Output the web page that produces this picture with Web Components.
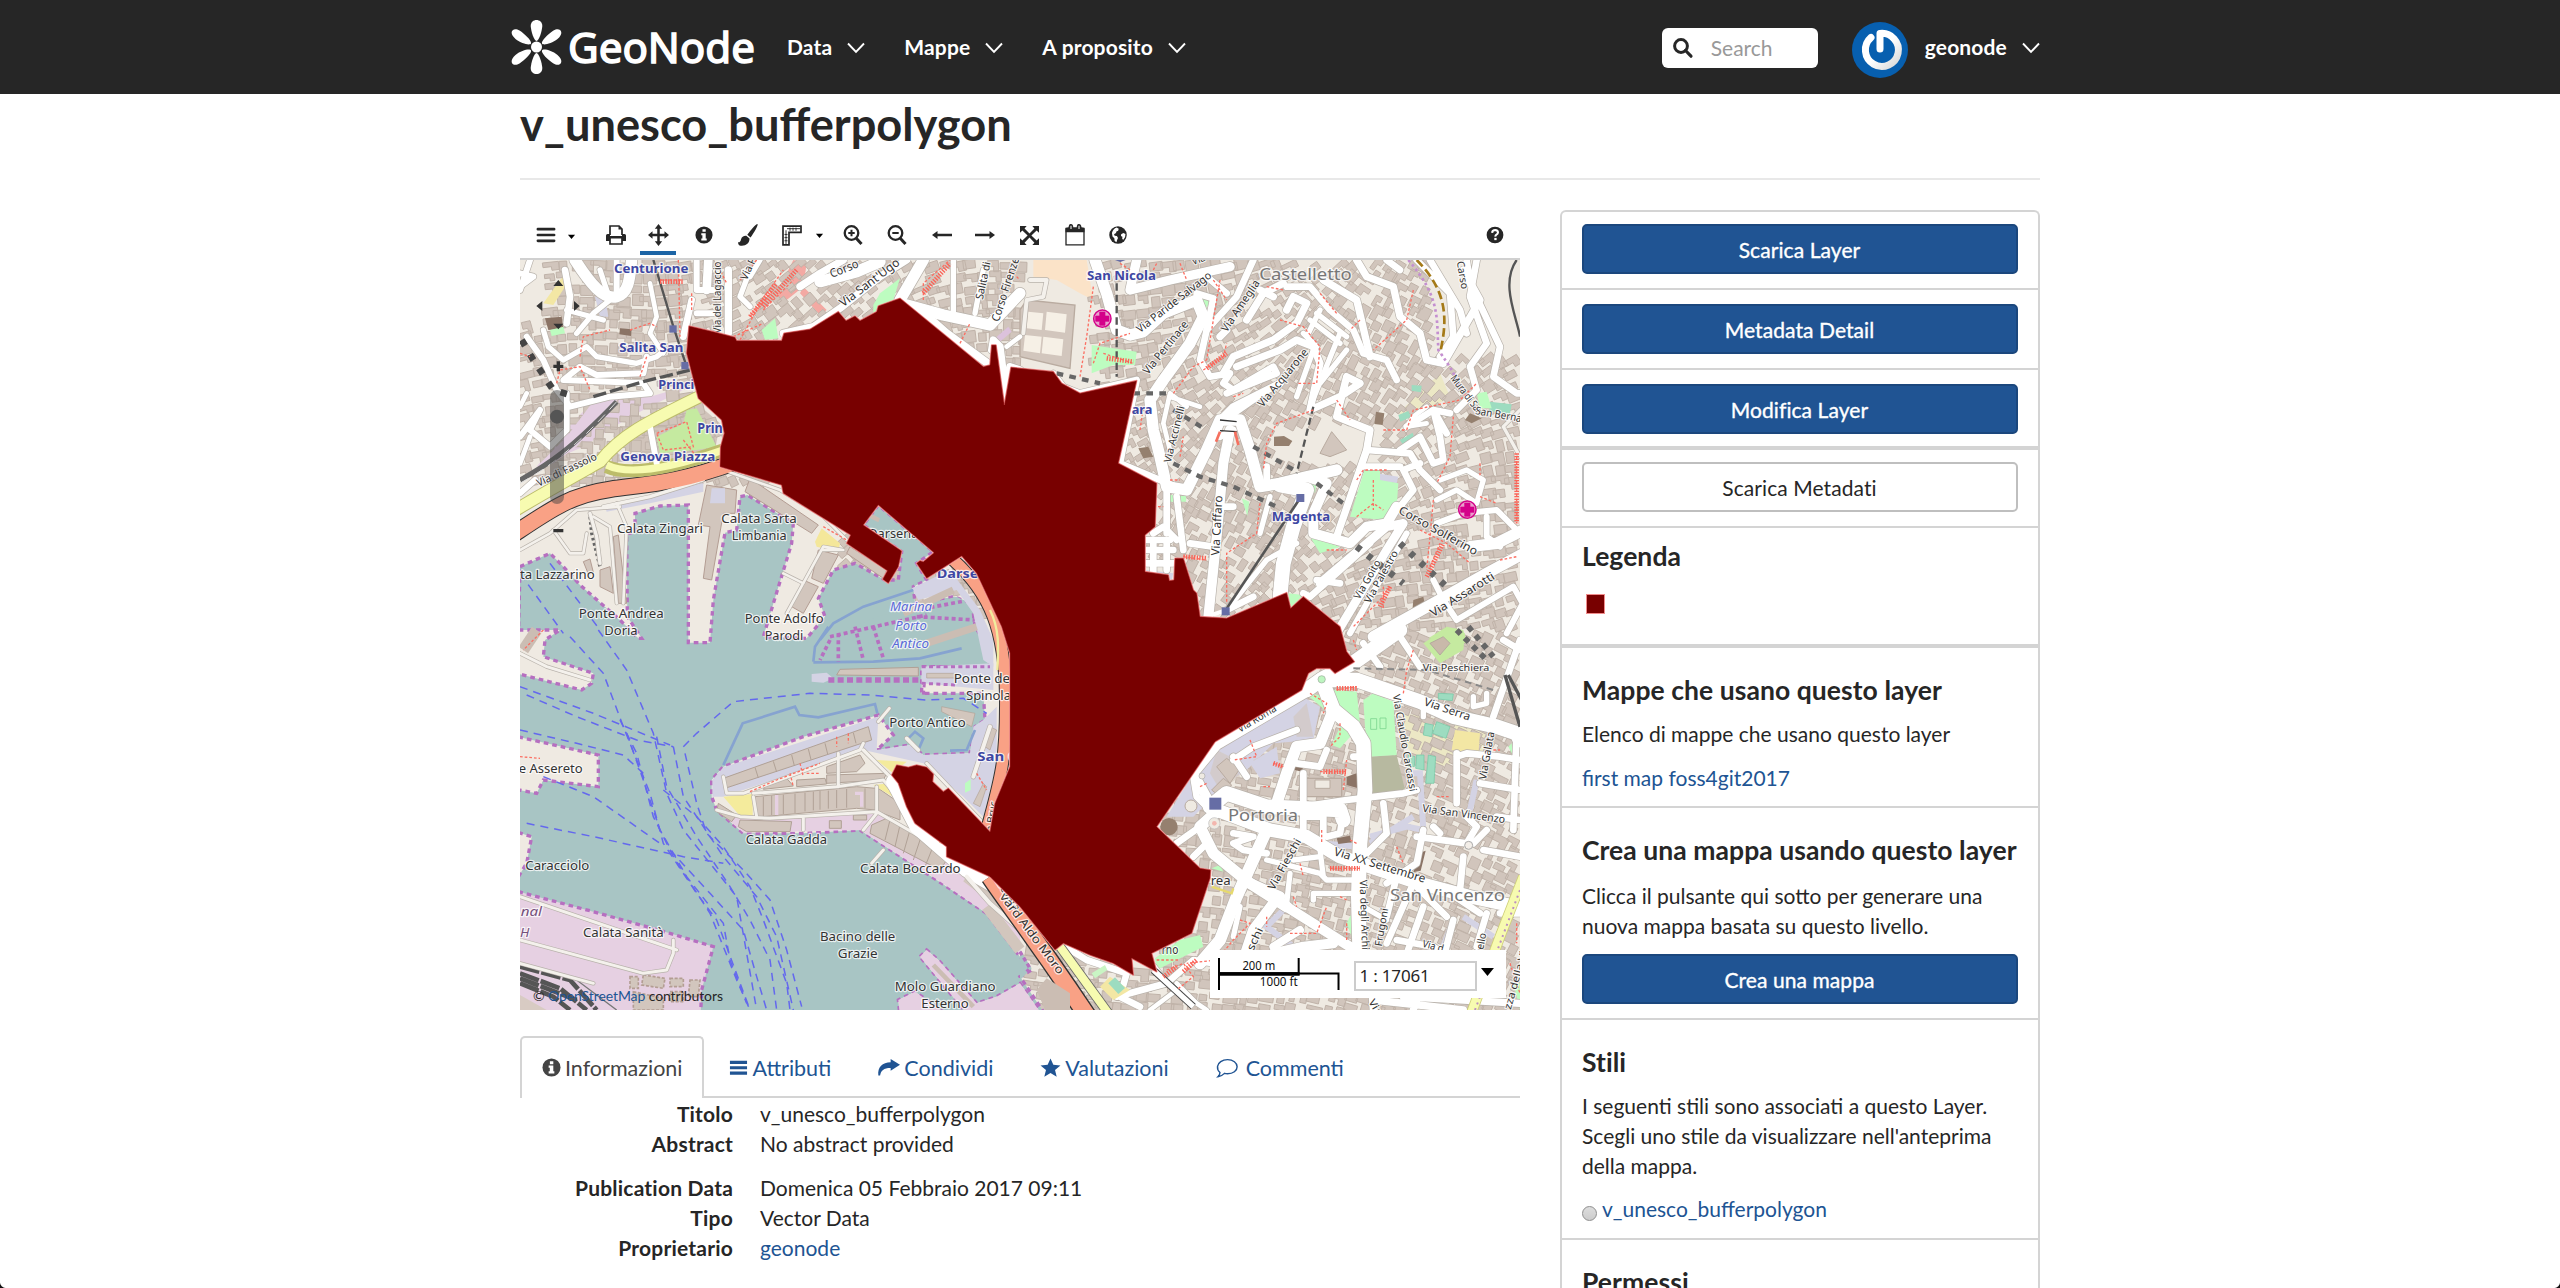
<!DOCTYPE html>
<html lang="it">
<head>
<meta charset="utf-8">
<title>v_unesco_bufferpolygon</title>
<style>
html,body{margin:0;height:100%}
body{height:1288px;overflow:hidden;background:#fff;font:21px/30px Lato,"Liberation Sans",sans-serif;color:#262626}
</style>
</head>
<body>
<geo-page></geo-page>
<script>
const define = (name, html, after) => {
  const tpl = document.createElement('template');
  tpl.innerHTML = html;
  customElements.define(name, class extends HTMLElement {
    constructor() {
      super();
      this.attachShadow({mode: 'open'}).append(tpl.content.cloneNode(true));
    }
    connectedCallback() { if (after) after(this, this.shadowRoot); }
  });
};

/* ---------- icons, drawn in a 20x20 box ---------- */
const ICONS = {
  chevron: '<path d="M2 5.500l8 8.300 8-8.300" fill="none" stroke="currentColor" stroke-width="1.900"/>',
  search: '<circle cx="8" cy="8" r="6.400" fill="none" stroke="currentColor" stroke-width="3"/><path d="M12.500 12.500l5.500 5.700" stroke="currentColor" stroke-width="3.200" stroke-linecap="round"/>',
  menu: '<path d="M1 3.500h18M1 10h18M1 16.500h18" stroke="currentColor" stroke-width="3" stroke-linecap="round"/>',
  bars: '<path d="M1 3h18v3.300H1zM1 8.600h18v3.300H1zM1 14.200h18v3.300H1z" fill="currentColor"/>',
  caret: '<path d="M3.500 7h13l-6.500 7.500z" fill="#000"/>',
  print: '<path d="M4 10V1h9l3 3v6M4 13v6h12v-6" fill="#fff" stroke="currentColor" stroke-width="1.700"/><path d="M12.500 1v3.500H16M0 10.500Q0 9 1.500 9H4v2h12V9h2.500Q20 9 20 10.500V16h-4v-2.500H4V16H0z" fill="currentColor"/>',
  move: '<path d="M10 0l3.500 4.300h-2.300v4.500h4.500V6.500L20 10l-4.300 3.500v-2.300h-4.500v4.500h2.300L10 20l-3.500-4.300h2.300v-4.500H4.300v2.300L0 10l4.300-3.500v2.300h4.500V4.300H6.500z" fill="currentColor"/>',
  info: '<circle cx="10" cy="10" r="9.500" fill="currentColor"/><path d="M8.300 3.500h3.600v3H8.300zM7 8h4.900v6H13v2.200H7V14h1.200v-3.800H7z" fill="#fff"/>',
  brush: '<path d="M19.500 0C20.500 1 16 8 12.500 12.300L9.300 9.800C13 5 18.500-.5 19.500 0zM8.300 10.700l3.200 2.500C11.700 18 7 20.500 1.500 19.500Q0 18.500 0 16.500c1.500.5 2.500-.6 3-2.500.6-2.300 2.800-3.500 5.300-3.300z" fill="currentColor"/>',
  ruler: '<path d="M1 1h18v6H7v12H1z" fill="#fff" stroke="currentColor" stroke-width="1.700"/><path d="M5 3.500h13M4 5v14M8 2.500v3M11 2.500v3M14 2.500v3M2.500 9h3M2.500 12h3M2.500 15h3" stroke="currentColor" stroke-width=".9"/>',
  zoomin: '<circle cx="8.500" cy="8" r="6.800" fill="none" stroke="currentColor" stroke-width="2.300"/><path d="M13 13l5.500 6" stroke="currentColor" stroke-width="3"/><path d="M8.500 4.800v6.400M5.300 8h6.400" stroke="currentColor" stroke-width="2"/>',
  zoomout: '<circle cx="8.500" cy="8" r="6.800" fill="none" stroke="currentColor" stroke-width="2.300"/><path d="M13 13l5.500 6" stroke="currentColor" stroke-width="3"/><path d="M5.300 8h6.400" stroke="currentColor" stroke-width="2"/>',
  left: '<path d="M0 10l5.500-4v2.800H20v2.400H5.500V14z" fill="currentColor"/>',
  right: '<path d="M20 10l-5.500-4v2.800H0v2.400h14.500V14z" fill="currentColor"/>',
  expand: '<path d="M0 0h7L4.800 2.500 10 8l5.200-5.500L13 0h7v7l-2.500-2.200L12 10l5.500 5.200L20 13v7h-7l2.200-2.500L10 12l-5.200 5.500L7 20H0v-7l2.500 2.200L8 10 2.500 4.800 0 7z" fill="currentColor"/>',
  calendar: '<path d="M1 4.500h18V19H1z" fill="#fff" stroke="currentColor" stroke-width="1.300"/><path d="M.5 3.500l3-.5Q4-.5 6 0q2 0 2.300 3h3.400Q12-.5 14 0q2 0 2.500 3l3 .5v4H.5z" fill="currentColor"/><path d="M6 1.500v3M14 1.500v3" stroke="#fff" stroke-width="1"/>',
  globe: '<circle cx="10" cy="10" r="9.700" fill="currentColor"/><path d="M8.500 1.700l2.300 1.300-.6 2.200-2 1-.4 1.700-2.200 1.200.7 1.700 2.500.4 1.200 2-1 2.300-.7 2.500-2-1.400-.4-3-2-2-.6-3.800Q4.500 3 8.500 1.700zM13.500 9.300l2.400-1.600 2.400 1.200q.3 3.800-2.300 6.300l-1.300-.8.2-2.400-1.600-1z" fill="#fff"/>',
  help: '<circle cx="10" cy="10" r="9.300" fill="currentColor"/><path d="M6.800 7.600Q7 4.500 10.200 4.500 13.300 4.600 13.300 7.300q0 1.500-2 2.600-.9.600-.8 1.900" fill="none" stroke="#fff" stroke-width="2.300"/><path d="M9.200 13.200h2.600v2.500H9.200z" fill="#fff"/>',
  share: '<path d="M20 7l-8.500-6v3.400C4 4.800-.5 9 .3 18.500h1.600C2.500 13 5.500 10.300 11.500 10.400V13.500z" fill="currentColor"/>',
  star: '<path d="M10 .5l2.700 6.300 6.800.6-5.200 4.500 1.600 6.900L10 15.100l-5.900 3.700 1.600-6.900L.5 7.400l6.800-.6z" fill="currentColor"/>',
  comment: '<path d="M10.500 2.500c5 0 8.700 3 8.700 6.800s-3.700 6.700-8.700 6.700q-1.500 0-2.800-.4Q5 18.500 1.800 18.800q1.800-1.700 1.800-4Q1 12.500 1.400 9C1.800 5.300 5.700 2.500 10.500 2.500z" fill="none" stroke="currentColor" stroke-width="1.300"/>'
};
define('geo-icon', '<style>:host{display:block;flex:none}svg{display:block;width:100%;height:100%;overflow:visible}</style>', (el, root) => {
  const w = el.getAttribute('w') || 20, h = el.getAttribute('h') || w;
  el.style.width = w + 'px'; el.style.height = h + 'px';
  root.innerHTML += `<svg viewBox="0 0 20 20" preserveAspectRatio="none">${ICONS[el.getAttribute('name')]}</svg>`;
});

/* ---------- header ---------- */
define('geo-nav-item', `<style>
:host{display:flex;align-items:center;gap:14px;font-weight:700;color:#fff;letter-spacing:.15px}
geo-icon{margin-top:2px}</style><slot></slot><geo-icon name="chevron" w="20" h="20"></geo-icon>`);

define('geo-header', `<style>
:host{display:flex;height:94px;background:#262626;box-sizing:border-box;padding:0 520px 0 510px;align-items:center}
.logo{flex:none;display:block;width:246px;height:94px}
nav{display:flex;gap:38px;margin-left:31px}
.search{display:flex;align-items:center;box-sizing:border-box;width:156px;height:40px;background:#fff;border-radius:6px;padding:0 11px;gap:18px;color:#999;margin-left:auto;margin-top:2px}
.search geo-icon{color:#262626}
.avatar{flex:none;width:56px;height:56px;margin:6px 17px 0 34px}
.user{margin-right:-1px}
</style>
<svg class="logo" viewBox="0 0 246 94">
<g fill="#fff" transform="translate(-.5 0)"><circle cx="27" cy="47" r="5.500"/>
<path d="M27 41c-2.500 0-5.500-10-5.800-15 0-8 11.600-8 11.600 0C32.500 31 29.500 41 27 41z"/>
<path d="M27 53c-2.500 0-5.500 10-5.800 15 0 8 11.600 8 11.600 0C32.500 63 29.500 53 27 53z"/>
<path d="M21.500 43.500c-1 2.200-9.500.3-15.500-4.500-8-7-2-12.500 4-8.500 5.500 3.500 12.500 10.500 11.500 13z"/>
<path d="M32.500 43.500c1 2.200 9.500.3 15.500-4.500 8-7 2-12.500-4-8.500-5.500 3.500-12.500 10.500-11.500 13z"/>
<path d="M21.500 50.500c-1-2.200-9.500-.3-15.500 4.500-8 7-2 12.500 4 8.500 5.500-3.500 12.500-10.500 11.500-13z"/>
<path d="M32.500 50.500c1-2.200 9.500-.3 15.500 4.500 8 7 2 12.500-4 8.500-5.500-3.500-12.500-10.500-11.500-13z"/></g>
<text x="58" y="62.500" font-family="'Noto Sans','Open Sans',sans-serif" font-size="42" fill="#fff" stroke="#fff" stroke-width="1.500" textLength="187" lengthAdjust="spacingAndGlyphs">GeoNode</text>
</svg>
<nav><geo-nav-item>Data</geo-nav-item><geo-nav-item>Mappe</geo-nav-item><geo-nav-item>A proposito</geo-nav-item></nav>
<div class="search"><geo-icon name="search" w="20"></geo-icon><span>Search</span></div>
<svg class="avatar" viewBox="0 0 56 56"><defs><linearGradient id="g" x1="0" y1="0" x2="1" y2="1"><stop offset=".5" stop-color="#fff"/><stop offset="1" stop-color="#d8d8d8"/></linearGradient></defs><circle cx="28" cy="28" r="28" fill="#075faf"/><path d="M19 15.500A16.500 16.500 0 1 0 28 11.500V27" fill="none" stroke="url(#g)" stroke-width="7" stroke-linecap="round" stroke-linejoin="round"/></svg>
<geo-nav-item class="user">geonode</geo-nav-item>`);

/* ---------- toolbar ---------- */
define('geo-toolbar', `<style>
:host{display:flex;height:48px;align-items:center;box-sizing:border-box;padding:2px 16px 0 17px;color:#262626}
.act{height:44px;width:36px;margin:0 19px 0 14px;display:flex;align-items:center;justify-content:center;border-bottom:4px solid #1c65a6;box-sizing:border-box;padding-top:8px;margin-top:-4px}
</style>
<geo-icon name="menu" w="18" style="margin-right:11px"></geo-icon>
<geo-icon name="caret" w="11" style="margin-right:29px;margin-top:3px"></geo-icon>
<geo-icon name="print" w="20"></geo-icon>
<div class="act"><geo-icon name="move" w="21" h="22"></geo-icon></div>
<geo-icon name="info" w="18" style="margin-right:25px"></geo-icon>
<geo-icon name="brush" w="20" h="22" style="margin-right:24px"></geo-icon>
<geo-icon name="ruler" w="20" h="21" style="margin-right:12px"></geo-icon>
<geo-icon name="caret" w="11" style="margin-right:18px"></geo-icon>
<geo-icon name="zoomin" w="20" style="margin-right:24px"></geo-icon>
<geo-icon name="zoomout" w="20" style="margin-right:25px"></geo-icon>
<geo-icon name="left" w="20" style="margin-right:23px"></geo-icon>
<geo-icon name="right" w="20" style="margin-right:25px"></geo-icon>
<geo-icon name="expand" w="19" style="margin-right:26px"></geo-icon>
<geo-icon name="calendar" w="20" h="22" style="margin-right:24px"></geo-icon>
<geo-icon name="globe" w="18"></geo-icon>
<geo-icon name="help" w="18" style="margin-left:auto"></geo-icon>`);

/* ---------- map ----------
   One map unit is a third of a pixel. The sheet is split in four tiles:
   a (north-west), b (north-east), c (south-west), d (south-east). */
const OFF = {a: [0, 0], b: [1530, 0], c: [0, 1140], d: [1530, 1140]};
const inTile = (t, s) => `<g transform="translate(${OFF[t]})">${s}</g>`;
const SEA = [[30,950],[120,910],[160,950],[210,1005],[330,1110],[385,1165],[395,1165],[352,1100],[350,850],[375,850],[375,790],[450,768],[535,765],[535,1178],[600,1178],[610,1050],[645,848],[680,840],[690,740],[712,735],[850,820],[845,880],[775,1110],[760,1160],[890,1165],[945,1100],[925,1045],[970,960],[1035,940],[1125,990],[1165,990],[1175,905],[1060,825],[1105,765],[1270,905],[1220,940],[1250,990],[1210,1010],[1215,1060],[1330,1040],[1385,1060],[1395,1130],[1440,1200],[1440,1250],[1235,1250],[1235,1330],[1420,1330],[1425,1410],[1395,1430],[1380,1510],[1240,1515],[1200,1485],[1100,1500],[1150,1455],[1105,1395],[880,1460],[640,1550],[605,1590],[605,1640],[620,1680],[700,1750],[880,1750],[1050,1740],[1280,1890],[1430,1990],[1530,2120],[1565,2160],[1530,2180],[1610,2300],[0,2300]];
const LANDS = [
  [[0,1140],[150,1140],[105,1170],[100,1220],[250,1270],[245,1300],[215,1320],[0,1265]],
  [[0,1455],[265,1515],[265,1610],[100,1590],[80,1630],[0,1615]],
  [[0,1740],[65,1760],[50,1840],[0,1920]],
  [[1230,2120],[1250,2100],[1285,2130],[1400,2260],[1460,2240],[1530,2200],[1600,2300],[1170,2300],[1165,2250],[1215,2225],[1320,2300],[1370,2290]]
];
const inside = (p, x, y) => {
  let r = false;
  for (let i = 0, j = p.length - 1; i < p.length; j = i++) {
    const [xi, yi] = p[i], [xj, yj] = p[j];
    if ((yi > y) !== (yj > y) && x < (xj - xi) * (y - yi) / (yj - yi) + xi) r = !r;
  }
  return r;
};
const UNESCO = [[537,228],[610,245],[675,262],[680,272],[815,272],[822,250],[900,238],[985,185],[1008,212],[1035,198],[1050,212],[1100,185],[1105,168],[1170,145],[1420,350],[1440,345],[1445,285],[1458,285],[1483,465],[1503,352],[1530,355],
[1630,365],[1655,400],[1710,430],[1880,392],[1825,640],[1940,700],[1935,830],[1905,855],[1905,965],[1975,975],[1978,992],[1992,990],[1995,925],[2020,925],[2050,1020],[2060,1030],[2070,1100],[2150,1105],[2330,1028],[2342,1075],[2380,1040],[2490,1130],[2510,1205],[2533,1235],[2475,1270],[2460,1255],[2420,1255],[2395,1270],[2375,1320],[2115,1475],[1940,1730],[2070,1855],[2102,1860],[2100,1885],[2045,2050],[1925,2110],[1940,2165],[1865,2125],[1870,2175],[1810,2140],[1740,2115],[1660,2080],[1635,2100],[1530,1970],[1440,1880],[1310,1820],[1310,1790],[1215,1720],[1190,1670],[1165,1600],[1145,1575],[1160,1545],[1195,1552],[1220,1545],[1250,1552],[1270,1572],[1268,1595],[1300,1625],[1315,1615],[1440,1745],[1455,1660],[1500,1550],[1500,1210],[1475,1130],[1400,970],[1355,918],[1250,985],[1220,940],[1230,932],[1240,935],[1272,908],[1105,765],[1060,825],[1175,903],[1165,950],[1135,1000],[1118,988],[1132,962],[1010,880],[1022,855],[820,730],[815,705],[630,650],[632,590],[643,550],[635,510],[565,445],[530,310]];

/* roads: [width, path] */
const ROADS = {
a: [[34,'M195,30 C240,100 280,150 320,140 S360,70 365,30'],[18,'M320,30L320,140'],[18,'M60,30L30,120M30,70L70,80L30,110'],[20,'M165,60L180,140 170,220'],[16,'M270,60L300,150 250,190 200,250M170,180L280,210'],[14,'M420,100L440,200 420,250 460,310'],[16,'M100,240L115,290 160,330 230,290 260,320 380,340 440,320 465,300'],[18,'M50,260L100,330 140,420 180,470 300,440 420,430 400,400 300,395 160,390 210,350 260,375 400,370 410,320'],[18,'M560,30L560,120 610,120M560,190L610,190'],[20,'M545,150L520,260'],[26,'M595,30L590,120'],[16,'M720,60L690,140 720,170M750,30L720,80'],[22,'M655,60L655,250'],[22,'M820,250L910,230 990,175 1110,80 1190,30'],[34,'M930,95L1040,65 1110,35'],[34,'M1170,150L1240,30'],[22,'M870,110L930,70 1000,30'],[34,'M1190,165L1300,195 1440,225 1530,130'],[16,'M1330,30L1330,190M1420,60L1395,190'],[14,'M1530,260L1490,290'],[18,'M30,560L90,480 60,540 120,590 170,540 170,430'],[18,'M420,530L440,640'],[14,'M30,640L60,560M30,470L50,430'],[22,'M1445,300L1450,270 1470,290 1490,450 1500,350 1530,360'],[24,'M1230,180L1310,250 1440,345'],[10,'M240,790L260,860 270,940M280,770L420,740 580,690'],[8,'M30,900L120,850 200,780 330,770'],[8,'M320,760L350,830 340,1060M250,800L300,830 320,1060M130,840L180,910 220,910 230,850'],[8,'M640,660L810,720 940,800 1010,870M940,900L1000,900 940,890 830,1090M820,970L880,1000'],[18,'M30,730L75,690']],
b: [[34,'M225,30L260,130 290,240 330,255 370,245 430,190 530,150 550,200 510,280 430,390 390,450 400,540 420,620 440,710 500,720 560,600 600,510 660,510 690,600 720,710 780,700 860,680 950,660'],[28,'M350,30L330,120 450,90 630,50'],[20,'M700,30L650,140 560,240 540,330 570,380 630,370 610,400 640,420 760,350 770,370 620,430'],[20,'M530,130L580,145 560,240M560,80L620,130'],[22,'M600,510L640,470 780,400M640,490L740,420'],[22,'M600,260L620,240M680,210L730,130 790,100M720,120L760,140'],[22,'M610,370L640,320 760,270 830,220 860,160 820,140 800,180M650,350L780,300 830,270 880,290 900,340 870,480 960,440 1020,400 980,380 950,500 1050,540 1040,600 950,860'],[20,'M800,110L870,110 930,180 1000,240 1030,310 1100,330 1130,390'],[16,'M870,210L960,280M890,190L980,260M850,250L890,290M900,180L860,260M960,250L870,470M980,300L900,400M830,440L880,300'],[22,'M910,90L1010,150 1050,320M1010,30L1040,80 1120,110 1140,200 1200,250 1220,330 1270,340 1380,150 1330,60'],[20,'M1190,30L1290,130 1300,260 1260,320M1230,30L1320,180 1340,250M1100,30L1140,60'],[20,'M1370,30L1350,140 1400,280 1350,350 1370,420 1310,480M1340,30L1350,100 1440,290 1420,380 1490,430 1530,430'],[30,'M630,540L610,640 590,860 565,1100'],[20,'M440,700L440,850M470,740L490,900M400,850L430,830 470,870'],[44,'M780,705L860,720 820,830 790,940 780,1040'],[30,'M860,680L920,700 880,790 880,850 990,880 1040,830 1100,820 1130,770'],[20,'M600,560L640,540M740,650L740,710M510,880L580,890M610,770L640,770'],[14,'M500,470L450,430 430,520 450,600M450,440L540,470'],[20,'M1040,600L1170,610 1200,660 1260,720M1040,650L1140,650M1140,770L1180,720 1150,660 1200,640'],[20,'M1160,530L1240,480 1260,560 1270,630 1240,640 1200,560 1140,600M1280,550L1240,480 1290,490'],[14,'M1220,470L1180,500 1160,530 1220,520'],[16,'M1260,690L1340,660 1390,690 1370,760 1310,720 1250,750'],[18,'M1250,820L1330,790 1430,780 1490,840M1400,800L1400,860 1440,890'],[34,'M1350,890L1430,880 1530,830'],[34,'M1060,1160L1240,1060 1400,970 1530,900'],[26,'M950,1150L1100,900 1150,820 1100,830 900,1000'],[20,'M700,1040L620,1080M850,1030L870,1040 950,970 1050,880M890,990L960,1000'],[18,'M1240,990L1270,1050 1310,1110 1480,1010 1530,1100M1460,1150L1530,1020M990,1150L1080,990 1160,850'],[16,'M750,740L720,850M830,880L740,930 620,1080'],[10,'M1530,450L1450,530 1500,620'],[20,'M400,870L400,970M440,870L440,960M380,900L460,900M380,940L460,940M380,870L450,870'],[12,'M80,90L70,140 20,150 10,250M30,90L80,90'],[20,'M180,430L350,390 300,640 420,690 490,720'],[18,'M100,370L130,410 180,430']],
c: [[9,'M30,70L110,110 240,150'],[9,'M640,440L650,490 700,490 1050,360 1060,340'],[9,'M620,540L690,560 780,565 1100,545 1300,660 1440,780M730,490L980,470 1120,450 1170,510M1100,550L1060,600M730,500L740,560M880,560L880,600M985,370L985,470M1100,470L1100,550'],[10,'M1060,360L1140,440 1210,600'],[44,'M1150,455L1220,590 1300,660 1370,720 1440,760'],[9,'M30,930L400,1030 470,1020 490,970 490,930M30,800L500,960M30,1000L250,1060'],[12,'M1370,740L1440,820 1530,900'],[11,'M1190,325L1225,360'],[9,'M1085,700L1120,660M1105,275L1138,235'],[9,'M1250,400L1420,580'],[12,'M1440,290L1390,440']],
d: [[44,'M860,180L905,148 1005,95 1140,0'],[44,'M905,150L1010,150 1200,215 1300,260 1430,290 1490,310 1500,330'],[44,'M905,150L940,240 1000,290 1030,340 1035,480 1020,640 1015,800 1020,1000'],[34,'M940,240L900,340 830,350 800,430 770,520'],[44,'M570,530L620,490 740,530 960,540 970,570'],[40,'M590,540L750,600 860,620 960,680 1200,760 1350,800 1490,830'],[34,'M585,550L540,590 580,670 690,760 800,830'],[36,'M740,600L650,800 600,930 540,1000'],[30,'M800,830L990,950 1020,990'],[32,'M690,760L780,800M760,820L700,900 640,1080'],[30,'M870,180L700,280 590,345 520,430 570,520'],[20,'M640,390L700,350 830,300M640,380L680,440'],[20,'M830,400L900,410 920,360M850,430L850,620'],[20,'M850,530L980,510 1150,490 1190,480M970,550L960,610 920,620M850,560L910,560 910,620'],[20,'M1090,520L1100,610 1040,670M1000,380L1040,380'],[20,'M640,610L700,620 640,640 670,660 740,670M470,640L540,590M520,680L560,640'],[16,'M740,690L900,730 920,750 1010,750M880,810L880,790 1000,790M900,660L910,740M820,690L900,680M810,730L800,820'],[20,'M1190,620L1340,640 1370,590 1340,560M1390,660L1500,680M1210,600L1190,700 1100,760M1100,860L1130,740M1330,680L1320,780M1360,640L1400,600M1260,610L1240,590'],[20,'M1310,380L1340,370 1440,380 1500,390M1310,370L1310,520M1380,460L1500,480M1490,300L1480,600M1430,560L1500,570'],[20,'M1100,940L1180,760M1190,770L1280,860M1130,930L1240,950 1300,990M1300,870L1240,1100M1210,830L1150,1000M1290,790L1380,850M1400,850L1370,950M1440,850L1500,850'],[20,'M1030,40L1080,110M1140,20L1200,110M1500,30L1420,260M1450,30L1500,60'],[16,'M1400,190L1400,220 1360,230 1360,200M1210,210L1210,260'],[20,'M120,940L200,990 320,1030 300,1100 360,1130M290,1100L440,1060 400,1010M440,1060L520,990 640,1010'],[14,'M390,1140L470,1080 560,1140M470,1060L530,1120'],[30,'M940,940L850,950 760,970'],[22,'M1060,1110L1330,1140M1050,1000L1060,1140M1150,1100L1500,1120M1200,1080L1180,1140'],[16,'M660,830L640,920M1030,830L1100,870'],[20,'M520,440L530,500 560,530'],[24,'M840,900L760,950']]
};
const PINK = {
a: ['M740,30L690,90M720,200L820,60M760,180L850,90M690,270L740,180 790,120M450,90L520,90M545,130L545,180M620,40L650,100M670,260L760,220M1240,150L1240,100 1320,30M1350,280L1380,220M1500,60L1530,90','M140,400L150,360 210,350 240,420M30,310L60,320M210,320L220,260 300,240M410,320L390,380M505,30L510,260M440,550L530,515 550,590 460,600 440,550M520,570L560,620','M940,830L1010,870M360,240L420,220 440,230'],
b: ['M220,110L200,260 180,380M250,310L340,340M220,340L240,280 330,250','M480,40L500,90M300,40L330,60M400,60L410,40M580,90L620,150M740,110L790,120M550,360L610,320 620,280M900,130L950,190M1180,120L1160,210 1060,300M1020,210L990,240M640,440L670,430M950,450L990,510','M1090,540L1160,540 1180,480 1320,450 1370,400M1300,500L1290,620 1250,700M1240,750L1230,860 1220,960M1380,640L1380,680M1380,740L1430,760M880,480L770,520 740,580 730,660','M720,760L710,850 620,910 620,1060M490,920L560,930M450,690L480,690M480,620L490,560M1010,690L1030,660 1100,660M1010,800L1060,760 1090,780M1060,690L1060,780M920,900L980,900M1110,1010L1080,1050 1000,1130M1090,1010L1090,1080M1490,620L1490,820M1200,840L1280,880 1350,940M1230,950L1260,880M1440,930L1490,920','M460,430L520,350 560,330M360,540L370,470M400,770L430,770M600,90L560,330M780,210L850,230 900,290 890,400 830,400'],
c: ['M720,485L800,450 930,400M840,430L850,470M870,400L880,440M980,320L980,350M1015,310L1015,340M30,380L90,385M1400,430L1430,480M890,430L930,430M100,0L40,60'],
d: ['M1180,60L1160,120 1150,190M1000,30L1010,60M950,180L1010,170M870,190L920,220 910,250M960,280L960,320 930,350M690,330L710,380 640,390M760,400L790,410M900,425L980,425M970,480L980,390M540,470L560,460','M905,600L905,640M930,715L1020,715M840,700L850,740M810,910L890,910 920,830M960,800L980,810M820,800L830,830M660,870L690,880 640,930 590,990 500,1000M410,990L480,990M440,1020L490,1000 520,1040 470,1080M740,860L740,890M980,880L980,930','M1250,500L1290,500M1420,360L1440,360M1130,650L1150,700M1490,880L1490,940M1470,1000L1500,1090M990,630L1010,640M730,470L750,470']
};
const GREEN = {
a: ['M1090,165L1110,130 1170,85 1150,150 1090,190z','M755,240L795,205 805,265 765,270z','M120,240L160,230 165,250 125,258z'],
b: ['M525,145L550,138 570,160 550,182z','M215,285L350,305 345,345 280,345 215,370z','M450,735L475,735 475,755 450,755zM480,738L498,738 498,755 480,755z','M665,745L688,755 682,798z','M1035,655L1080,650 1080,690 1135,700 1130,770 1090,810 990,800z','M870,860L960,890 900,910z','M1370,430L1400,425 1415,475 1380,475z','M805,1030L850,1035 812,1075z','M430,865L440,850 450,865z','M870,700L890,700 885,730z'],
c: ['M1365,460L1382,448 1382,480 1365,488z'],
d: ['M1030,210L1060,190 1120,215 1130,375 1045,380 1035,290z','M940,180L1010,185 1020,280 960,240z','M960,290L1000,310 960,355 935,345z','M850,185L915,200 915,240z','M480,930L540,915 550,950 410,1020 405,985z','M980,880L995,850 995,920z','M575,715L600,705 610,725z','M1480,1060L1500,1060 1500,1140z','M1465,350L1475,340 1478,375z']
};
/* labels: text, x, y, length, size, colour, rotation, extra attributes */
const K = '#333', B = '#3e47a3', G = '#777';
const b7 = 'font-weight="700"', it = 'font-style="italic"';
const LABELS = {
a: [['Centurione',312,68,223,38,B,0,b7],['Salita San',328,307,192,38,B,0,b7],['Princi',445,417,108,38,B,0,b7],['Prin',562,549,76,40,B,0,b7],['Genova Piazza',331,633,285,38,B,0,b7],['Calata Zingari',321,850,258,38,K,0],['Calata Sarta',634,818,226,38,K,0],['Limbania',665,869,165,38,K,0],['ta Lazzarino',30,987,224,38,K,0],['Ponte Andrea',206,1103,255,38,K,0],['Doria',283,1154,100,38,K,0],['Ponte Adolfo',704,1119,237,38,K,0],['Parodi',764,1169,116,38,K,0],['Darsena',1075,863,150,38,K,0],['Darse',1280,984,125,38,B,0,b7],['Marina',1140,1084,126,36,'#5a6bd8',0,it],['Porto',1156,1140,94,36,'#5a6bd8',0,it],['Via di Fassolo',86,710,195,32,K,-25],['Via del Lagaccio',632,250,215,31,K,-90],['Via P',710,92,70,32,K,-65],['Corso',965,84,90,36,K,-22],["Via Sant'Ugo",1000,172,215,36,K,-37],['Salita di',1418,150,115,32,K,-78],['Corso Firenze',1466,217,200,34,K,-72]],
b: [['San Nicola',201,90,207,38,B,0,b7],['Castelletto',718,90,277,46,G,0],['ara',335,492,62,38,B,0,b7],['Magenta',755,813,175,38,B,0,b7],['Via Paride Salvago',360,250,275,33,K,-38],['Via Pertinace',384,375,195,33,K,-51],['Via Ameglia',620,248,180,33,K,-56],['Via Acquarone',728,473,215,33,K,-50],['Via Accinelli',452,640,175,31,K,-76],['Via Caffaro',598,917,180,35,K,-87],['Corso Solferino',1133,788,265,35,K,29],['Via Goito',1018,1050,130,31,K,-60],['Via Palestro',1050,1062,175,31,K,-61],['Via Assarotti',1240,1102,220,35,K,-32],['Carso',1310,35,85,31,K,80],['Mura di San',1290,385,140,31,K,53],['San Berna',1365,492,140,32,K,10],['Via',520,45,40,31,K,-20]],
c: [['Antico',1147,54,110,36,'#5a6bd8',0,it],['Ponte del',1331,160,180,38,K,0],['Spinola',1368,210,135,38,K,0],['Porto Antico',1138,290,229,38,K,0],['San G',1402,393,125,38,B,0,b7],['e Assereto',26,430,192,38,K,0],['Calata Gadda',707,643,244,38,K,0],['Caracciolo',46,719,192,38,K,0],['Calata Boccardo',1050,729,302,38,K,0],['Bacino delle',930,933,226,38,K,0],['Grazie',983,984,120,38,K,0],['Calata Sanità',219,920,242,38,K,0],['nal',32,858,64,36,'#75507b',0,it],['H',30,921,28,36,'#75507b',0,it],['Molo Guardiano',1154,1083,303,38,K,0],['Esterno',1234,1133,142,38,K,0],['a Bruc',1448,605,90,30,K,-82],['Elevata',1455,752,110,30,K,57],['del Molo',1200,530,150,28,K,50]],
d: [['Portoria',624,572,210,48,G,0],['San Vincenzo',1110,812,345,46,G,0],['Via Serra',1210,225,145,34,K,19],['Via Roma',660,308,130,31,K,-31],['Via Peschiera',1208,124,200,28,K,0],['Via Claudio Carcassi',1118,195,295,31,K,80],['Via Galata',1398,450,145,32,K,-80],['Via San Vincenzo',1206,545,250,32,K,8],['Via XX Settembre',940,675,285,35,K,17],['Via Fieschi',762,782,170,33,K,-61],['eschi',690,985,95,33,K,-65],['Via degli Archi',1019,750,210,31,K,88],['Frugoni',1085,950,115,31,K,-80],['Via d',1205,950,65,31,K,15],['ello',1390,960,50,31,K,-80],['zza della Vi',1472,1140,180,31,K,-74],['rea',572,764,60,38,K,0],['rno',425,972,50,38,K,0],['vard Aldo Moro',-62,800,295,35,K,53],['Via',1045,1115,50,31,K,60]]
};
const FERRY = ['M30,170L250,250 480,345','M50,195L200,260 380,330 490,350','M30,300L200,340 340,375 400,430','M100,440L250,500 450,640','M50,580L250,620 520,680 640,700','M180,20L280,130 340,290 420,490 460,640 560,790 620,870 720,1140','M265,0L350,120 430,310 470,490 520,600 680,800 740,1140','M520,350L560,310 670,215 900,190 1080,195 1250,210 1360,205 1430,250','M525,370L560,520 590,610 700,720 780,810 830,960 875,1130','M350,310L400,450 450,600 530,740 640,880 660,990 710,1120','M440,320L470,470 560,620 660,770 720,870 780,990 800,1140','M490,350L520,500 640,680 740,800 800,920 850,1140','M460,480L560,560 640,650 720,770 760,870 830,1060 840,1140','M480,660L600,790 700,900 740,1040 770,1140','M330,270L380,370 430,560 490,680 600,850 680,1050 720,1140'];

const buildMap = () => {
  let seed = 7;
  const rnd = () => (seed = (seed * 16807) % 2147483647) / 2147483647;
  const hole = [[2760,30,3030,330],[1530,30,1750,420],[2300,540,2620,640],[40,720,560,1160],[560,700,1000,1160],[30,30,110,230]];
  let low = '';
  for (let y = 40; y < 2290; y += 36) for (let x = 40; x < 3020; x += 37) {
    const cx = x + rnd() * 12, cy = y + rnd() * 12, w = 11 + rnd() * 11, h = 9 + rnd() * 9, k = rnd();
    if (k < .06 || inside(SEA, cx, cy) || inside(UNESCO, cx, cy) || (cx < 1560 && cy > 1100)) continue;
    if (hole.some(q => cx > q[0] && cx < q[2] && cy > q[1] && cy < q[3])) continue;
    const t = cx > 1530 ? (cy > 1140 ? .28 + Math.sin(cx / 400) * .2 : -.6 + Math.sin(cx / 260 + cy / 300) * .5) : -.35 + Math.sin(cx / 200) * .4;
    const c = Math.cos(t), s = Math.sin(t);
    const P = (a, b) => `${(cx + a * c - b * s).toFixed(0)},${(cy + a * s + b * c).toFixed(0)}`;
    low += k < .45 ? `M${P(-w*1.2,-h)}L${P(w*1.2,-h)} ${P(w*1.2,h*1.2)} ${P(w*.1,h*1.2)} ${P(w*.1,h*.2)} ${P(-w*1.2,h*.2)}z` : `M${P(-w,-h)}L${P(w,-h)} ${P(w,h)} ${P(-w,h)}z`;
  }
  const poly = p => p.join(' ');
  const tiles = fn => Object.keys(OFF).map(t => inTile(t, fn(t))).join('');
  const sq = (x, y, r = 11) => `<rect x="${x - r}" y="${y - r}" width="${2 * r}" height="${2 * r}" fill="#666da5"/>`;
  const cross = (x, y) => `<circle cx="${x}" cy="${y}" r="26" fill="#eaa0cd" stroke="#d4008a" stroke-width="4.500"/><path d="M${x-8},${y-20}h16v12h12v16h-12v12h-16v-12h-12v-16h12z" fill="#d4008a" stroke="#d4008a" stroke-width="2" stroke-linejoin="round"/>`;
  return `
<rect x="0" y="0" width="3100" height="2300" fill="#efeae2"/>
${inTile('b','<path d="M40,30L200,30 220,150 180,130 110,90 40,80z" fill="#fbe3c8"/><path d="M1260,370L1135,490 1170,510 1290,440z" fill="#ece8c5"/>')}
${inTile('d','<path d="M1150,250L1400,290 1390,370 1230,420 1160,350z" fill="#ece8c5"/>')}
${inTile('a','<path d="M790,150L850,30 890,40 880,110 830,150zM880,110L950,180 930,195 870,130z" fill="#f3a9a3"/><path d="M150,560L260,440 420,440 560,400 360,500 220,590 80,650z" fill="#e4cfe2"/><path d="M370,570L440,520 560,460 630,520 615,600 420,640z" fill="#d1c4bb"/>')}
<path d="${low}" fill="#d1c5bc" stroke="#c0b3a9" stroke-width="3"/>
${inTile('a','<path d="M260,440L330,440 200,590 130,640 80,650 170,560z" fill="#e4cfe2"/><path d="M440,560L520,520 530,480 560,475 620,590 560,600 450,610z" fill="#c5eaa0"/><path d="M100,160L150,90 165,75 165,110 130,165z" fill="#f3e7a4"/><path d="M1455,265L1495,230 1505,245 1465,280z" fill="#dcc2dc"/><path d="M255,140h30l10,60h-25z" fill="#d4d3e4"/><path d="M105,205l50,-5 5,35 -45,5zM330,235l35,3 -2,20 -35,-5z" fill="#8b7466"/>')}
${inTile('b','<path d="M20,150L165,165 150,355 0,320V180z" fill="#d2c6bd" stroke="#b9aba0" stroke-width="4"/><path d="M25,185l45,5 -5,50 -45,-5zM80,185l60,8 -5,55 -60,-8zM15,255l50,5 -5,50 -50,-8zM70,260l60,8 -5,50 -60,-8z" fill="#f6f0e6"/><path d="M1070,670L1135,680 1130,700 1070,690zM380,960L460,970 455,990 375,965z" fill="#d4d3e4"/><path d="M762,560l30,-2 25,15 -10,15 -45,0zM1068,485l25,5 -5,35 -25,-3zM1015,265l20,5 5,40 -18,-10zM355,595l30,-5 15,30 -30,5zM1350,490l35,15 -30,15 -20,-10zM1180,1050l30,-10 10,50 -45,15z" fill="#95806f"/><path d="M900,610L935,545 980,600 930,620z" fill="#d2c6bd" stroke="#b9aba0" stroke-width="3"/><path d="M1410,455l65,8 -5,28 -62,-8zM1175,405l30,2 -2,20 -28,-5zM1135,495l30,-12 8,18 -32,14zM1140,570l38,-22 5,15 -35,20z" fill="#9ddcc0"/><path d="M1225,1165L1280,1130 1330,1140 1340,1180z" fill="#c5eaa0"/>')}
${inTile('d','<path d="M585,345L780,240 830,190 900,230 880,330 760,340 680,420 620,460 520,560 440,560 520,430z" fill="#d4d3e4"/><path d="M1210,40L1270,0 1335,10 1330,60 1260,100z" fill="#c5eaa0"/><path d="M1045,380L1130,375 1155,480 1055,510z" fill="#b7b9a0"/><path d="M1305,300L1380,310 1375,375 1295,360z" fill="#f3e7a4"/><path d="M1050,620L1160,590 1210,600 1200,430 1170,430M1050,640L1180,560" stroke="#d4d3e4" stroke-width="18" fill="none"/><path d="M1300,870L1270,950M1370,450L1350,540M900,640L1020,650M790,840L740,890 820,950M1330,860L1420,920" stroke="#d4d3e4" stroke-width="18" fill="none"/><path d="M1215,280l25,5 -5,35 -25,-5zM1250,275l40,15 -12,35 -40,-15zM1190,375l22,0 0,45 -25,-5zM1225,375l22,5 -5,80 -25,0zM1255,190l45,2 -3,20 -42,-5zM1165,375l20,5 -2,30 -18,0z" fill="#9ddcc0" stroke="#6fc9a5" stroke-width="2"/><path d="M590,360L640,385 660,440 600,480 570,430zM700,390L780,350 790,440 730,440zM820,260L860,220 880,320 830,320z" fill="#d2c6bd" opacity=".6"/><path d="M690,400L770,350 780,430 720,445z" fill="#d4d3e4"/><path d="M855,445h110v55h-110z" fill="#d2c6bd" stroke="#b9aba0" stroke-width="4"/><path d="M885,450h45v25h-45z" fill="#efeae2" stroke="#b9aba0" stroke-width="3"/><path d="M575,480l35,-35 25,20 -35,35zM590,410l30,-25 40,30 -30,45z" fill="#d2c6bd" stroke="#b9aba0" stroke-width="3"/><circle cx="447" cy="590" r="26" fill="#95806f"/><circle cx="513" cy="528" r="18" fill="#efeae2" stroke="#b9aba0" stroke-width="3"/><path d="M980,440l30,-10 5,45 -35,-10zM950,625l40,-8 5,20 -40,5zM825,400l25,10 -5,15 -20,-5zM1195,670l22,-8 -15,60 -22,5z" fill="#8b7466"/><path d="M1230,40l40,-20 20,20 -30,35z" fill="#c9b9aa" stroke="#a99" stroke-width="2"/>')}
<polygon points="${poly(SEA)}" fill="#a8c5c4" stroke="#b66fc0" stroke-width="10" stroke-dasharray="14 12"/>
${LANDS.map(p => `<polygon points="${poly(p)}" fill="#efeae2" stroke="#b66fc0" stroke-width="10" stroke-dasharray="14 12"/>`).join('')}
<polygon points="${poly(LANDS[3])}" fill="#e6d0e2"/>
${inTile('c',`<path d="M0,778L250,845 480,910 610,950 575,1080 570,1200 0,1200z" fill="#e6d0e2" stroke="#b66fc0" stroke-width="10" stroke-dasharray="14 12"/>
<path d="M620,540L700,560 1100,550 1300,660 1440,760 1530,880 1530,975 1430,850 1280,748 1050,600 700,608z" fill="#e6d0e2"/>
<path d="M1105,260L640,412 607,450 607,500 640,500 1060,360 1240,400 1360,500 1420,560 1460,400 1460,230 1420,270 1390,290 1380,370 1240,375 1200,345 1100,360z" fill="#d4d3e4"/>
<path d="M640,445L1075,290 1085,330 645,475z" fill="#d2c6bd" stroke="#b0a196" stroke-width="3"/><path d="M735,412l10,32M790,394l10,32M845,375l8,32M895,357l8,32M945,340l8,32M1030,308l8,32" stroke="#b0a196" stroke-width="3"/>
<path d="M770,460L830,445 850,468 760,478zM860,450L945,445 950,462 860,470zM950,435L1130,430 1120,450 950,460zM950,410L1050,375 1065,400 1040,425 950,430z" fill="#d2c6bd" stroke="#b0a196" stroke-width="3"/>
<path d="M735,500L1040,470 1098,475 1098,540 1040,535 735,562z" fill="#d2c6bd" stroke="#b0a196" stroke-width="3"/><path d="M760,500v58M785,497v58M820,494v58M855,491v58M885,488v56M910,485v56M930,483v56M955,482v54M980,480v54M1010,477v56M1065,475v60" stroke="#b0a196" stroke-width="3"/><path d="M800,495v60M1035,490l20,0 0,40" stroke="#e6d0e2" stroke-width="10" fill="none"/>
<path d="M1105,475L1170,520 1170,570 1105,545zM690,570L845,575 840,605 710,605 685,590zM625,520L680,555 665,575 620,545zM958,572h36v23h-36zM1030,555h40v15h-40zM1085,585L1130,565 1220,610 1310,690 1290,720 1080,610z" fill="#d2c6bd" stroke="#b0a196" stroke-width="3"/><path d="M1140,570l-15,60M1170,585l-15,65M1200,600l-20,70M1230,630l-20,60M1265,660l-20,50" stroke="#b0a196" stroke-width="3"/>
<path d="M640,500L728,492 728,560 690,558zM1100,390L1190,395 1150,430zM1090,465L1140,460 1165,510z" fill="#f4eb9c"/>
<path d="M905,132L950,128 970,145 940,158 905,155zM1235,110L1450,100 1450,180 1235,160z" fill="#d4d3e4"/><path d="M980,135L990,118 1225,112 1225,138z" fill="#d2c6bd" stroke="#b0a196" stroke-width="3"/><path d="M955,150H1235" stroke="#b66fc0" stroke-width="16" stroke-dasharray="18 10"/><path d="M1235,110H1440M1235,160L1340,165M1243,160L1240,195" stroke="#b66fc0" stroke-width="9" stroke-dasharray="12 10"/>
<path d="M1250,130h90v14h-90zM1295,230l100,20 -10,40 -90,-45zM1440,290l20,10 -20,60 -15,-10zM1390,520l30,-60 10,10 -20,60z" fill="#d2c6bd" stroke="#b0a196" stroke-width="2"/>
<path d="M640,405L698,280 855,230 868,255 925,262 1095,222 1102,250M910,95L915,50 955,-10M910,97L1090,95 1230,85 1355,55M1195,325L1215,305 1240,325 1225,360M1320,362L1370,360 1395,300" fill="none" stroke="#86a3d0" stroke-width="8"/>
<path d="M1270,1005L1390,1130" stroke="#cbbdb3" stroke-width="14"/>
<path d="M1430,830L1530,960M1370,740L1500,840" stroke="#d2c6bd" stroke-width="34"/>
<path d="M360,1040l25,0 0,35 -25,0zM400,1035l65,10 -5,30 -65,-10zM480,1045l40,0 0,25 -40,0zM540,1050l30,0 -5,50 -30,0zM370,1085l90,20 0,35 -90,0zM480,1085l40,0 0,30 -40,0z" fill="#d2c6bd" stroke="#b39d93" stroke-width="5" stroke-dasharray="9 5"/>
<path d="M30,1010L180,1050 260,1140M30,1030L150,1075 230,1140M30,1060L130,1100 180,1140M30,1045L200,1110" stroke="#555" stroke-width="14" stroke-dasharray="60 6" fill="none"/><path d="M30,1000L200,1050 320,1140" stroke="#777" stroke-width="4" fill="none"/><path d="M30,1095L110,1140H30z" fill="#d8cbc3"/>
<path d="M80,0L40,60" stroke="#cbbdb3" stroke-width="34"/>`)}
${inTile('a',`<path d="M965,1160L1100,1100 1220,1070 1340,1040 1380,1060 1390,1130 1300,1170 1200,1200z" fill="#a8c5c4"/><path d="M1220,1080L1380,1050M1220,1100L1395,1110M960,1160L1250,1095M985,1150L985,1235M1035,1130L1060,1230M1090,1130L1120,1225M960,1170L930,1230" stroke="#b66fc0" stroke-width="11" stroke-dasharray="12 9" fill="none"/><path d="M1205,1015L1320,960 1410,1080 1450,1170 1450,1250 1420,1230 1390,1090 1340,1020 1225,1050z" fill="#d4d3e4"/><path d="M1180,1090L1330,1020M1250,1180L1400,1130" stroke="#cbbdb3" stroke-width="22"/><path d="M930,1170L970,1120 1060,1070 1210,1020" stroke="#86a3d0" stroke-width="8" fill="none"/>
<path d="M720,685L925,825 905,850 705,725zM1020,890L1130,960 1120,985 1010,910zM925,900L985,915 940,1000 905,985zM880,990L925,1010 880,1090 845,1070zM590,705L680,720 675,790 640,790 605,990 580,985 600,830 565,825zM310,860L325,855 350,1060 325,1060zM270,960L300,950 310,1030 270,1010zM220,935l20,-8 10,40 -15,5z" fill="#d2c6bd" stroke="#b39d93" stroke-width="3"/><path d="M285,770L400,745 520,705 580,700 580,725 420,760 290,785zM605,715h40v45h-45z" fill="#d4d3e4"/><path d="M915,875L935,835 990,880 985,905 920,890z" fill="#f4e79a"/><path d="M240,800L245,850 270,950" stroke="#666" stroke-width="10" stroke-dasharray="8 8" fill="none"/><path d="M1080,790l30,15 -5,12 -30,-15z" fill="#cbbdb3"/>`)}
${tiles(t => GREEN[t].map(d => `<path d="${d}" fill="#bdfcc0"/>`).join(''))}
${tiles(t => `<g fill="none" stroke="#b8b2ab" stroke-linejoin="round" stroke-linecap="round">${ROADS[t].map(r => `<path d="${r[1]}" stroke-width="${r[0] + 4}"/>`).join('')}</g>`)}
${inTile('a',`<g fill="none"><path d="M0,860C120,780 180,735 300,718S500,700 680,635" stroke="#333" stroke-width="52"/><path d="M0,790C100,730 190,680 270,635 330,560 400,520 600,425M290,650Q380,690 640,600" stroke="#bcbc6a" stroke-width="40"/></g>`)}
${tiles(t => `<g fill="none" stroke="#fff" stroke-linejoin="round" stroke-linecap="round">${ROADS[t].map(r => `<path d="${r[1]}" stroke-width="${r[0]}"${r[0] < 13 ? ' stroke="#f4f1ec"' : ''}/>`).join('')}</g>`)}
${inTile('a',`<g fill="none"><path d="M0,860C120,780 180,735 300,718S500,700 680,635" stroke="#f9a185" stroke-width="46"/><path d="M0,790C100,730 190,680 270,635 330,560 400,520 600,425" stroke="#f7fbb0" stroke-width="34"/><path d="M290,645Q380,690 640,600" stroke="#f7fbb0" stroke-width="22"/>
<path d="M30,690C120,640 180,600 320,455" stroke="#666" stroke-width="15"/><path d="M30,700C120,650 200,590 320,455" stroke="#ddd" stroke-width="3" stroke-dasharray="30 20"/><path d="M250,440L400,395 540,360" stroke="#555" stroke-width="10" stroke-dasharray="40 12"/><path d="M430,30L490,230 530,350" stroke="#555" stroke-width="7"/><path d="M35,270L70,330 130,420 180,435" stroke="#444" stroke-width="20" stroke-dasharray="20 30"/></g>
${sq(489,237)}${sq(525,347)}`)}
${inTile('c','<g fill="none"><path d="M1330,-210C1440,-110 1485,0 1487,200S1470,450 1430,600" stroke="#333" stroke-width="40"/><path d="M1330,-210C1440,-110 1485,0 1487,200S1470,450 1430,600" stroke="#f9a185" stroke-width="34"/><path d="M1440,-60C1470,0 1465,60 1462,120" stroke="#f1ec9e" stroke-width="7"/><path d="M1440,740C1500,830 1560,900 1740,1170" stroke="#333" stroke-width="58"/><path d="M1440,740C1500,830 1560,900 1740,1170" stroke="#f9a185" stroke-width="50"/></g>')}
${inTile('d','<g fill="none"><path d="M120,950L265,1150" stroke="#666" stroke-width="30"/><path d="M120,950L265,1150" stroke="#f7fbb0" stroke-width="25"/><path d="M1350,1160L1440,920 1510,740" stroke="#cfcf7a" stroke-width="32"/><path d="M1350,1160L1440,920 1510,740" stroke="#f7fbb0" stroke-width="27"/><path d="M1365,1140L1500,780" stroke="#bb8fc0" stroke-width="6" stroke-dasharray="6 12"/><path d="M1455,135L1500,290M1465,135L1510,220" stroke="#555" stroke-width="10"/><path d="M400,1020L520,1130" stroke="#444" stroke-width="22"/><path d="M400,1020L520,1130" stroke="#fff" stroke-width="16"/><path d="M1310,0L1400,90M1345,-10L1420,80" stroke="#666" stroke-width="17" stroke-dasharray="17 17"/><path d="M1000,115L1220,120 1420,180" stroke="#888" stroke-width="6" stroke-dasharray="20 14"/></g><path d="M240,1070L270,1040 330,1080 280,1110z" fill="#f3e7a4"/><path d="M265,1060l20,-18 30,32 -20,18z" fill="#9ddcc0"/><path d="M50,1080L80,1045 150,1090 150,1140 75,1140z" fill="#cbbdb3"/><path d="M0,960L35,1015 0,1050z" fill="#a8c5c4"/><path d="M215,1030L255,1005 262,1020 225,1045z" fill="#c9f5c4"/><path d="M0,965L30,1015 20,1025" stroke="#b66fc0" stroke-width="10" stroke-dasharray="12 9" fill="none"/><circle cx="905" cy="148" r="11" fill="#bdf5c0" stroke="#9a9" stroke-width="2"/><circle cx="1346" cy="646" r="12" fill="#f3eee8" stroke="#aaa" stroke-width="3"/><circle cx="583" cy="580" r="17" fill="#efeae2" stroke="#bbb" stroke-width="2"/><circle cx="583" cy="580" r="7" fill="#f3b6ae"/><circle cx="546" cy="438" r="9" fill="#efeae2" stroke="#aaa" stroke-width="2"/><path d="M1052,266h18v32h-18zM1080,264h18v32h-18z" fill="none" stroke="#7dd68f" stroke-width="2.500"/><path d="M575,770L635,790 640,775" fill="none" stroke="#e6d96e" stroke-width="7"/>')}
${inTile('b','<g fill="none"><path d="M840,745L617,1080" stroke="#555" stroke-width="8"/><path d="M290,100L290,380M880,470L830,670" stroke="#555" stroke-width="7" stroke-dasharray="22 12"/><path d="M460,640L540,680 640,710 780,775M460,480L560,540M700,590L830,665M110,370L240,400M340,430L440,430M890,700L970,760" stroke="#666" stroke-width="13" stroke-dasharray="20 19"/><path d="M1010,890L1150,1000M1140,880L1290,1020" stroke="#666" stroke-width="20" stroke-dasharray="16 26"/><path d="M1490,30C1440,100 1490,200 1500,260" stroke="#555" stroke-width="7"/><path d="M1190,30C1290,130 1280,220 1260,310" stroke="#a57a18" stroke-width="8" stroke-dasharray="26 12"/><path d="M1165,30C1260,140 1250,200 1255,300 1290,350 1310,380 1320,420" stroke="#c48fd0" stroke-width="8" stroke-dasharray="8 9"/><path d="M600,510L650,515M600,542L650,545" stroke="#333" stroke-width="4"/><path d="M600,545L588,575M645,545L655,585" stroke="#f5705f" stroke-width="8"/></g><path d="M560,1100L620,1080" stroke="#fff" stroke-width="12"/>')}
${tiles(t => `<g fill="none" stroke="#fb6f63" stroke-width="4" stroke-dasharray="8 6">${PINK[t].map(d => `<path d="${d}"/>`).join('')}</g>`)}
<g fill="none" stroke="#fb6357" stroke-width="14" stroke-dasharray="4 4"><path d="M720,200L800,100M760,170L860,60M1240,130L1320,40M450,95L520,95M2090,355L2150,310M2640,1010L2610,1070M3020,610V820M2750,980L2800,880M2440,1565L2510,1565M2460,1855L2550,1855M2020,2165L2060,2130M1960,2180L2000,2150M2020,920L2090,925M1790,325L1870,335M2290,1540L2320,1550M2480,1315L2540,1315"/></g>
${inTile('c',`<g fill="none" stroke="#6468ee" stroke-width="4.500" stroke-dasharray="24 18">${FERRY.map(d => `<path d="${d}"/>`).join('')}<path d="M30,-170L160,10M120,-200L270,0"/></g>`)}
${inTile('b', cross(247,206) + cross(1342,779))}
<g stroke="#fff" stroke-opacity=".75" stroke-width="7" stroke-linejoin="round" paint-order="stroke" font-family="'Noto Sans','Open Sans',sans-serif">${tiles(t => LABELS[t].map(([s, x, y, l, z, c, r, e = '']) => `<text x="${x}" y="${y}" textLength="${l}" lengthAdjust="spacingAndGlyphs" font-size="${z}" fill="${c}" ${e} ${r ? `transform="rotate(${r} ${x} ${y})"` : ''}>${s}</text>`).join(''))}</g>
<polygon points="${poly(UNESCO)}" fill="#780000" stroke="#f7a1a1" stroke-width="5" stroke-linejoin="round"/>
<polygon points="${poly(UNESCO)}" fill="#780000" stroke="#c03c3c" stroke-width="1.500"/>
${inTile('b', sq(841,744,12) + sq(617,1084,12) + '<path d="M285,30h32l-16,6z" fill="#666da5"/>')}
${inTile('d', sq(586,521,18))}`;
};

define('geo-map', `<style>
:host{display:block;width:1000px;height:750px;border-top:2px solid #d0d0d0;position:relative;overflow:hidden}
svg{display:block}
.map{width:1000px;height:750px}
.nav{position:absolute;left:0;top:0}
.attr{position:absolute;left:13px;bottom:5px;font-size:14px;line-height:18px;letter-spacing:-.1px;white-space:nowrap}
.attr a{color:#205493}
.scale{position:absolute;left:690px;top:690px;width:296px;height:48px;background:#fff;display:flex;align-items:center;box-sizing:border-box;padding:0 12px 0 8px}
.sel{display:flex;align-items:center;width:124px;height:30px;border:2px solid #ccc;box-sizing:border-box;padding-left:4px;margin:4px 4px 0 14px;background:#fff;font:17px/20px "Noto Sans",sans-serif;white-space:nowrap;letter-spacing:-.2px}
</style>
<svg class="map" viewBox="30 30 3000 2250" preserveAspectRatio="none"></svg>
<svg class="nav" width="70" height="300" viewBox="30 30 210 900" fill="#333">
<path d="M130,108L145,90 160,108zM97,153L79,168 97,183zM192,153L209,168 192,183zM130,221L145,238 160,221z"/>
<path d="M140,334h10v10h10v10h-10v10h-10v-10h-10v-10h10zM130,837h30v10h-30z"/>
<rect x="120" y="420" width="42" height="342" rx="21" fill="#444" opacity=".5"/><circle cx="141" cy="500" r="21" fill="#555"/></svg>
<div class="attr">© <a>OpenStreetMap</a> contributors</div>
<div class="scale"><svg width="122" height="34" viewBox="0 0 122 34" font-family="'Noto Sans',sans-serif" font-size="12.500" fill="#111"><path d="M1 1V33M1 16.500H81V1" fill="none" stroke="#000" stroke-width="2"/><path d="M1 16.500H121V33" fill="none" stroke="#000" stroke-width="2"/><path d="M0 17h82" stroke="#000" stroke-width="3.500"/><text x="24.500" y="13" textLength="33" lengthAdjust="spacingAndGlyphs">200 m</text><text x="42" y="29" textLength="38" lengthAdjust="spacingAndGlyphs">1000 ft</text></svg>
<div class="sel">1 : 17061</div><svg width="13" height="8" viewBox="0 0 13 8" style="margin-top:-4px"><path d="M0 0h13L6.500 8z"/></svg></div>`,
(el, root) => { root.querySelector('.map').innerHTML = buildMap(); });

/* ---------- tabs and details ---------- */
define('geo-tab', `<style>
:host{display:flex;align-items:center;box-sizing:border-box;height:62px;padding:0 20px 1px 20px;color:#205493;border:2px solid transparent;border-bottom:0;gap:4px;white-space:nowrap;font-size:21.500px}
:host([active]){color:#444;border-color:#d4d4d4;border-radius:5px 5px 0 0;background:#fff}
</style><slot name="icon"></slot><slot></slot>`);
define('geo-tabs', `<style>:host{display:flex;height:62px;margin-top:26px;box-shadow:inset 0 -2px #d4d4d4;gap:3px}</style><slot></slot>`);
define('geo-row', `<style>
:host{display:flex;gap:27px;height:30px;position:relative;top:1px}
b{display:block;width:213px;text-align:right;flex:none;letter-spacing:.2px}
</style><b></b><span><slot></slot></span>`, (el, root) => { root.querySelector('b').textContent = el.getAttribute('label'); });

/* ---------- sidebar ---------- */
define('geo-panel', `<style>
:host{display:block;box-sizing:border-box;width:480px;border:2px solid #d4d4d4;border-bottom:0;border-radius:6px 6px 0 0;height:1100px}
</style><slot></slot>`);
define('geo-item', `<style>
:host{display:block;padding:14px 20px;border-bottom:2px solid #d4d4d4}
:host([thick]){border-bottom-width:4px}
</style><slot></slot>`);
define('geo-button', `<style>
:host{display:flex;align-items:center;justify-content:center;height:50px;box-sizing:border-box;border:2px solid #1b477d;border-radius:5px;background:#205493;color:#fff;padding-top:1px;padding-right:1px;letter-spacing:.08px;-webkit-text-stroke:.35px #fff}
:host([plain]){background:#fff;color:#262626;border-color:#bfbfbf;-webkit-text-stroke:0}
</style><slot></slot>`);
define('geo-heading', `<style>:host{display:block;font-size:26.500px;line-height:30px;font-weight:700;white-space:nowrap;letter-spacing:.06px}</style><slot></slot>`);
define('geo-text', `<style>:host{display:block;white-space:pre-line}</style><slot></slot>`);

define('geo-page', `<style>
:host{display:block;height:1288px;overflow:hidden;position:relative}
a{color:#205493}
h1{margin:0 520px;height:86px;box-sizing:border-box;padding-top:6px;font-size:45.200px;line-height:48px;font-weight:700;border-bottom:2px solid #e8e8e8}
.cols{display:flex;justify-content:space-between;width:1520px;margin:30px 520px 0}
.main{width:1000px}
.gap{height:14px}
.swatch{width:17px;height:18px;margin:23px 0 0 4px;background:#780000;border:1px solid #f08c8c}
.style{display:flex;align-items:center;gap:5px;margin-top:13px}
.radio{width:13px;height:13px;border-radius:50%;border:1px solid #8e8e8e;background:linear-gradient(#ddd,#ccc);margin-top:8px}
.corner{position:absolute;bottom:0;width:6px;height:6px}
</style>
<geo-header></geo-header>
<h1>v_unesco_bufferpolygon</h1>
<div class="cols">
<div class="main">
<geo-toolbar></geo-toolbar>
<geo-map></geo-map>
<geo-tabs>
<geo-tab active><geo-icon slot="icon" name="info" w="19"></geo-icon>Informazioni</geo-tab>
<geo-tab><geo-icon slot="icon" name="bars" w="19"></geo-icon>Attributi</geo-tab>
<geo-tab><geo-icon slot="icon" name="share" w="22" h="19"></geo-icon>Condividi</geo-tab>
<geo-tab><geo-icon slot="icon" name="star" w="21" h="20"></geo-icon>Valutazioni</geo-tab>
<geo-tab style="gap:8px"><geo-icon slot="icon" name="comment" w="22" h="21"></geo-icon>Commenti</geo-tab>
</geo-tabs>
<geo-row label="Titolo">v_unesco_bufferpolygon</geo-row>
<geo-row label="Abstract">No abstract provided</geo-row>
<div class="gap"></div>
<geo-row label="Publication Data">Domenica 05 Febbraio 2017 09:11</geo-row>
<geo-row label="Tipo">Vector Data</geo-row>
<geo-row label="Proprietario"><a>geonode</a></geo-row>
</div>
<geo-panel>
<geo-item style="padding:12px 20px 14px"><geo-button>Scarica Layer</geo-button></geo-item>
<geo-item><geo-button>Metadata Detail</geo-button></geo-item>
<geo-item thick style="padding-bottom:12px"><geo-button>Modifica Layer</geo-button></geo-item>
<geo-item style="padding-top:12px"><geo-button plain>Scarica Metadati</geo-button></geo-item>
<geo-item thick style="padding:13px 20px 30px"><geo-heading>Legenda</geo-heading><div class="swatch"></div></geo-item>
<geo-item style="padding:27px 20px 13px"><geo-heading>Mappe che usano questo layer</geo-heading><geo-text style="margin-top:14px">Elenco di mappe che usano questo layer</geo-text><geo-text style="margin-top:14px"><a>first map foss4git2017</a></geo-text></geo-item>
<geo-item style="padding-top:27px"><geo-heading>Crea una mappa usando questo layer</geo-heading><geo-text style="margin:16px 0 13px">Clicca il pulsante qui sotto per generare una
nuova mappa basata su questo livello.</geo-text><geo-button>Crea una mappa</geo-button></geo-item>
<geo-item style="padding-top:27px"><geo-heading>Stili</geo-heading><geo-text style="margin-top:14px">I seguenti stili sono associati a questo Layer.
Scegli uno stile da visualizzare nell'anteprima
della mappa.</geo-text><div class="style"><div class="radio"></div><a>v_unesco_bufferpolygon</a></div></geo-item>
<geo-item style="padding-top:27px"><geo-heading>Permessi</geo-heading></geo-item>
</geo-panel>
</div>
<div class="corner" style="left:0;background:radial-gradient(circle at 6px 0,transparent 5.500px,#111 6.500px)"></div>
<div class="corner" style="right:0;background:radial-gradient(circle at 0 0,transparent 5.500px,#111 6.500px)"></div>`);
</script>
</body>
</html>
